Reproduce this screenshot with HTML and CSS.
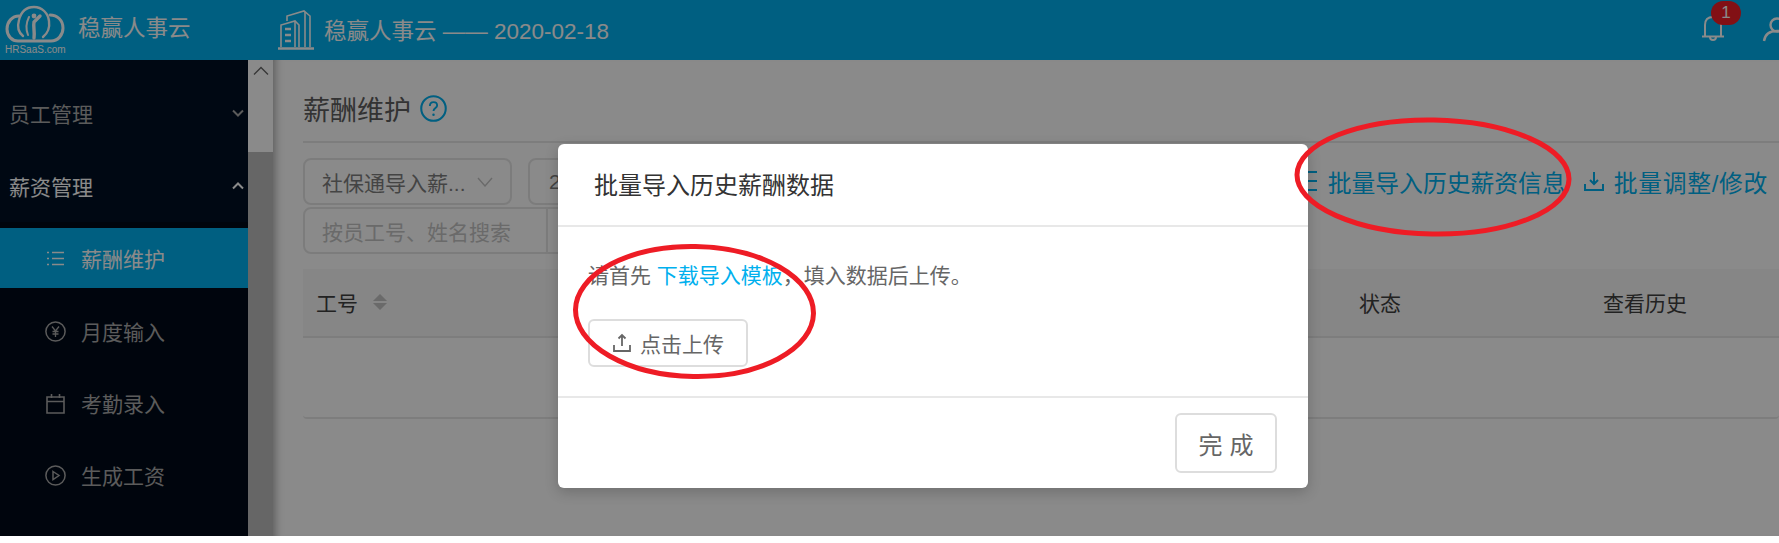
FILE: index.html
```html
<!DOCTYPE html>
<html lang="zh-CN">
<head>
  <meta charset="UTF-8" />
  <title>稳赢人事云</title>
  <link rel="stylesheet" href="styles.css">
</head>
<body>

<div class="app">
  <header class="topbar">
    <div class="brand">
      <div class="logo">
        <svg class="logo-mark" viewBox="0 0 60 40" width="60" height="40" fill="none" stroke="#fff" stroke-width="3" stroke-linecap="round">
          <path d="M14 13C7 13 2 19 2 26C2 33 7 38 13 38H46C53 38 58 32 58 25C58 17 52 12 45 12" />
          <path d="M18 33C13 29 12 24 14 17C16 9 21 4 29 4C37 4 43 10 44 18C45 25 43 30 38 34" stroke-width="2.4" />
          <path d="M23 32C21 27 21 20 24 14" stroke-width="2" />
          <path d="M29 35C30 29 28 24 29 19L35 13" stroke-width="3.4" />
          <circle cx="29" cy="13" r="2.4" fill="#fff" stroke="none" />
        </svg>
        <span class="logo-sub">HRSaaS.com</span>
      </div>
      <span class="brand-name">稳赢人事云</span>
    </div>
    <svg class="building" viewBox="0 0 36 40" width="36" height="40" fill="none" stroke="#fff" stroke-width="1.6">
      <path d="M0 38.5H36" stroke-width="2.4" />
      <path d="M9 11V6L26 1L32 6V37" />
      <path d="M27 2V37" />
      <path d="M3 37V15L17 11L21 15V37" />
      <path d="M17 12V37" />
      <path d="M7 19H13M7 25H13M7 31H13" stroke-width="2.4" />
    </svg>
    <span class="page-name">稳赢人事云 —— 2020-02-18</span>
    <div class="top-right">
      <div class="bell">
        <svg viewBox="0 0 22 25" width="22" height="25" fill="none" stroke="#fff" stroke-width="2">
          <path d="M3 20V9C3 4 6 1 11 1C16 1 19 4 19 9V20" />
          <path d="M0 20.5H22" />
          <path d="M8 21C8 25 14 25 14 21" />
        </svg>
        <span class="badge">1</span>
      </div>
      <svg class="user" viewBox="0 0 30 26" width="30" height="26" fill="none" stroke="#fff" stroke-width="2.4">
        <circle cx="15" cy="8" r="6.5" />
        <path d="M2 24C3 17 8 14 15 14C22 14 27 17 28 24" />
      </svg>
    </div>
  </header>

  <div class="content">
    <nav class="sidebar">
      <div class="menu-title dim">员工管理
        <svg class="caret" viewBox="0 0 12 8" width="12" height="8" fill="none" stroke="#a8a8a8" stroke-width="2"><path d="M1 1.5L6 6.5L11 1.5" /></svg>
      </div>
      <div class="menu-title open">薪资管理
        <svg class="caret" viewBox="0 0 12 8" width="12" height="8" fill="none" stroke="#fff" stroke-width="2"><path d="M1 6.5L6 1.5L11 6.5" /></svg>
      </div>
      <ul class="submenu">
        <li class="sub-item active">
          <svg viewBox="0 0 21 21" width="21" height="21" fill="none" stroke="#fff" stroke-width="1.6"><path d="M2 4.5H4M7 4.5H19M2 10.5H4M7 10.5H19M2 16.5H4M7 16.5H19" /></svg>
          薪酬维护
        </li>
        <li class="sub-item">
          <svg viewBox="0 0 21 21" width="21" height="21" fill="none" stroke="#a8a8a8" stroke-width="1.5"><circle cx="10.5" cy="10.5" r="9.6" /><path d="M7 5.5L10.5 10L14 5.5M10.5 10V16M7.5 10.5H13.5M7.5 13H13.5" stroke-width="1.3" /></svg>
          月度输入
        </li>
        <li class="sub-item">
          <svg viewBox="0 0 21 21" width="21" height="21" fill="none" stroke="#a8a8a8" stroke-width="1.6"><path d="M2 4H19V20H2ZM2 8.5H19M6.5 1V5M14.5 1V5" /></svg>
          考勤录入
        </li>
        <li class="sub-item">
          <svg viewBox="0 0 21 21" width="21" height="21" fill="none" stroke="#a8a8a8" stroke-width="1.5"><circle cx="10.5" cy="10.5" r="9.6" /><path d="M8 6.5L14 10.5L8 14.5Z" /></svg>
          生成工资
        </li>
      </ul>
    </nav>

    <div class="scrollbar">
      <svg viewBox="0 0 16 10" width="16" height="10" fill="none" stroke="#666" stroke-width="1.4"><path d="M1 8.5L8 1.5L15 8.5" /></svg>
    </div>

    <main class="main">
      <div class="page-head">
        <h2>薪酬维护</h2>
        <svg viewBox="0 0 26 26" width="27" height="27" fill="none" stroke="#00b0ee"><circle cx="13" cy="13" r="11.8" stroke-width="2" /><path d="M9.5 10.5C9.5 8 11 6.8 13 6.8C15 6.8 16.5 8 16.5 10C16.5 12.5 13 12.5 13 15.5" stroke-width="1.8" /><circle cx="13" cy="19" r="1.2" fill="#00b0ee" stroke="none" /></svg>
      </div>

      <div class="toolbar">
        <div class="filters">
          <div class="field select">社保通导入薪...
            <svg viewBox="0 0 16 10" width="16" height="10" fill="none" stroke="#c4c4c4" stroke-width="1.4"><path d="M1 1L8 9L15 1" /></svg>
          </div>
          <div class="field date">2020</div>
          <div class="field search">按员工号、姓名搜索</div>
          <div class="field search-btn"></div>
        </div>
        <div class="actions">
          <a class="action">
            <svg viewBox="0 0 22 22" width="22" height="22" fill="none" stroke="#00b0ee" stroke-width="2"><path d="M2 2H20M8 11H20M2 20H20M6 7L2 11L6 15" /></svg>
            批量导入历史薪资信息
          </a>
          <a class="action wide">
            <svg viewBox="0 0 22 22" width="22" height="22" fill="none" stroke="#00b0ee" stroke-width="2"><path d="M11 2V14M7 10L11 14L15 10M2 14V20H20V14" /></svg>
            批量调整/修改
          </a>
        </div>
      </div>

      <div class="table">
        <div class="table-head">
          <div class="cell">工号
            <span class="sort"><i class="up"></i><i class="down"></i></span>
          </div>
          <div class="cell">状态</div>
          <div class="cell">查看历史</div>
        </div>
        <div class="table-empty"></div>
      </div>
    </main>
  </div>

  <div class="mask">
    <div class="modal">
      <div class="modal-title">批量导入历史薪酬数据</div>
      <div class="modal-body">
        <p>请首先 <a>下载导入模板</a>，填入数据后上传。</p>
        <button class="upload">
          <svg viewBox="0 0 20 20" width="20" height="20" fill="none" stroke="#666" stroke-width="1.8"><path d="M10 2V13M6.5 5.5L10 2L13.5 5.5M2 12V18H18V12" /></svg>
          点击上传
        </button>
      </div>
      <div class="modal-foot">
        <button class="done">完成</button>
      </div>
    </div>
  </div>

  <svg class="marks" viewBox="0 0 1779 543" width="1779" height="543" fill="none" stroke="#ee1c25" stroke-width="5">
    <ellipse cx="1433" cy="177" rx="136" ry="57" transform="rotate(1 1433 177)" />
    <ellipse cx="694.5" cy="311.5" rx="119" ry="65" transform="rotate(1 694.5 311.5)" />
  </svg>
</div>

</body>
</html>
```

FILE: styles.css
```css
html, body {
  margin: 0; padding: 0; height: 100%;
  overflow: hidden;
  background: #fff;
  font-family: "Liberation Sans", "Noto Sans CJK SC", sans-serif;
}

.app {
  position: relative;
  width: 1779px;
  height: 543px;
  overflow: hidden;
}

/* top bar */
.topbar {
  display: flex;
  align-items: center;
  height: 60px;
  background: #00b0ee;
  color: #fff;
}

.brand {
  display: flex;
  align-items: flex-start;
  width: 278px;
  height: 60px;
}

.logo {
  display: flex;
  flex-direction: column;
  margin-left: 5px;
  padding-top: 3px;
  width: 60px;
}

.logo-sub {
  margin-top: 1px;
  font-size: 10px;
  line-height: 12px;
  white-space: nowrap;
}

.brand-name {
  margin-left: 13px;
  font-size: 22.5px;
  line-height: 58px;
}

.building {
  flex: none;
}

.page-name {
  margin-left: 10px;
  font-size: 22.5px;
  margin-top: -2px;
}

.top-right {
  display: flex;
  align-items: flex-start;
  height: 60px;
  margin-left: auto;
}

.bell {
  position: relative;
  height: 25px;
  margin-top: 16px;
}

.badge {
  position: absolute;
  top: -15px;
  left: 9px;
  width: 30px;
  height: 24px;
  border-radius: 12px;
  background: #f01e28;
  font-size: 17px;
  line-height: 24px;
  text-align: center;
}

.user {
  flex: none;
  margin: 17px -13px 0 38px;
}

/* body */
.content {
  display: flex;
  height: 476px;
}

.sidebar {
  width: 248px;
  padding-top: 17px;
  box-sizing: border-box;
  background: #001024;
  overflow: hidden;
}

.menu-title {
  display: flex;
  align-items: center;
  justify-content: space-between;
  height: 72px;
  padding: 0 4px 0 9px;
  color: #a8a8a8;
  font-size: 21px;
}

.menu-title.open {
  height: 73px;
  color: #fff;
}

.submenu {
  margin: 0;
  padding: 6px 0 40px;
  list-style: none;
  background: #000a18;
}

.sub-item {
  display: flex;
  align-items: center;
  gap: 15px;
  height: 70px;
  padding-bottom: 2px;
  padding-left: 45px;
  color: #a8a8a8;
  font-size: 21px;
}

.sub-item.active {
  height: 60px;
  padding-bottom: 0;
  margin-bottom: 8px;
  background: #00b0ee;
  color: #fff;
}

.scrollbar {
  display: flex;
  justify-content: center;
  flex: none;
  width: 25px;
  padding-top: 6px;
  box-sizing: border-box;
  background: linear-gradient(#fff 92px, #bdbdbd 92px);
}

.main {
  flex: 1;
  min-width: 0;
  padding-left: 30px;
  background: #fff;
  box-shadow: inset 10px 0 8px -8px rgba(0, 0, 0, 0.35);
}

.page-head {
  display: flex;
  align-items: center;
  gap: 9px;
  height: 36px;
  padding: 30px 0 15px;
  border-bottom: 2px solid #e8e8e8;
}

.page-head h2 {
  margin: 0;
  font-size: 27px;
  font-weight: 400;
  color: #5e5e5e;
}

.toolbar {
  display: flex;
  margin-top: 15px;
}

.filters {
  display: flex;
  flex-wrap: wrap;
  align-content: flex-start;
  width: 900px;
  flex: none;
  column-gap: 16px;
}

.field {
  display: flex;
  align-items: center;
  box-sizing: border-box;
  height: 47px;
  border: 2px solid #e6e6e6;
  color: #7f7f7f;
  font-size: 21px;
  background: #fff;
  white-space: nowrap;
}

.select {
  justify-content: space-between;
  width: 209px;
  padding: 0 17px;
  border-radius: 8px;
}

.date {
  width: 675px;
  padding-left: 19px;
  border-radius: 8px;
}

.search {
  width: 245px;
  margin-top: 2px;
  padding-left: 17px;
  border-radius: 8px 0 0 8px;
  color: #c4c4c4;
}

.search-btn {
  width: 300px;
  margin-top: 2px;
  margin-left: -16px;
  border-left: 0;
}

.actions {
  display: flex;
  gap: 17px;
  margin-left: auto;
  padding-right: 11px;
}

.action {
  display: flex;
  align-items: center;
  gap: 9px;
  height: 46px;
  color: #00b0ee;
  font-size: 23.8px;
  white-space: nowrap;
}

.action.wide {
  letter-spacing: 0.7px;
}

.table {
  margin-top: 15px;
}

.table-head {
  display: grid;
  grid-template-columns: 1043px 244px 1fr;
  height: 67px;
  background: #f7f7f7;
  border-bottom: 2px solid #e8e8e8;
}

.cell {
  display: flex;
  align-items: center;
  gap: 15px;
  padding: 0 0 2px 13px;
  color: #3f3f3f;
  font-size: 21px;
}

.sort {
  display: flex;
  flex-direction: column;
  gap: 2px;
}

.sort i {
  width: 0;
  height: 0;
  border-left: 7px solid transparent;
  border-right: 7px solid transparent;
}

.sort .up {
  border-bottom: 7px solid #c4c4c4;
}

.sort .down {
  border-top: 7px solid #c4c4c4;
}

.table-empty {
  height: 79px;
  border-bottom: 2px solid #e8e8e8;
  border-radius: 0 0 4px 4px;
}

/* dialog */
.mask {
  position: absolute;
  top: 0;
  left: 0;
  width: 100%;
  height: 536px;
  background: rgba(0, 0, 0, 0.46);
}

.modal {
  width: 750px;
  height: 344px;
  margin: 144px 0 0 558px;
  background: #fff;
  border-radius: 6px;
  box-shadow: 0 4px 14px rgba(0, 0, 0, 0.2);
}

.modal-title {
  height: 81px;
  padding-left: 36px;
  border-bottom: 2px solid #e8e8e8;
  color: #333;
  font-size: 24px;
  line-height: 84px;
}

.modal-body {
  height: 169px;
  box-sizing: border-box;
  padding: 33px 30px 0;
  color: #666;
  font-size: 21px;
}

.modal-body p {
  margin: 0 0 27px;
  line-height: 32px;
}

.modal-body a {
  color: #00b0ee;
}

.upload {
  display: flex;
  align-items: center;
  justify-content: center;
  gap: 8px;
  width: 160px;
  height: 48px;
  border: 2px solid #ddd;
  border-radius: 6px;
  background: #fff;
  color: #666;
  font: inherit;
}

.modal-foot {
  display: flex;
  justify-content: flex-end;
  box-sizing: border-box;
  height: 92px;
  padding: 15px 31px 0 0;
  border-top: 2px solid #e8e8e8;
}

.done {
  width: 102px;
  height: 60px;
  border: 2px solid #ddd;
  border-radius: 6px;
  background: #fff;
  color: #666;
  font: inherit;
  font-size: 24px;
  letter-spacing: 7px;
  text-indent: 7px;
}

/* hand drawn red rings */
.marks {
  position: absolute;
  top: 0;
  left: 0;
  pointer-events: none;
}
```
